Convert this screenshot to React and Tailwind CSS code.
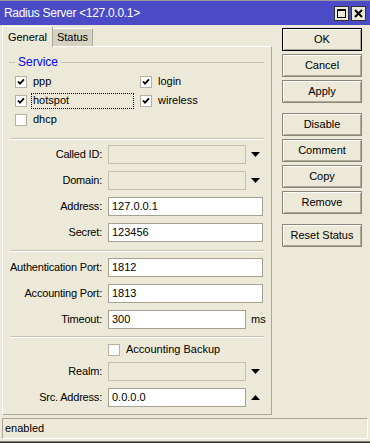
import React from "react";

const Check = () => (
  <svg width="8" height="8" viewBox="0 0 8 8">
    <polyline points="1,3.5 3,5.6 7,1.4" fill="none" stroke="#000" strokeWidth="1.8" />
  </svg>
);

const CheckBox = ({ checked }) => (
  <span className="w-[12px] h-[12px] shrink-0 bg-white border border-[#b4b1a2] flex items-center justify-center">
    {checked && <Check />}
  </span>
);

const ArrowDown = () => (
  <svg width="9" height="5" viewBox="0 0 9 5" className="ml-[5px]">
    <polygon points="0,0 9,0 4.5,5" fill="#000" />
  </svg>
);

const ArrowUp = () => (
  <svg width="9" height="5" viewBox="0 0 9 5" className="ml-[5px]">
    <polygon points="0,5 9,5 4.5,0" fill="#000" />
  </svg>
);

const Separator = ({ className }) => (
  <div className={`mx-[7px] h-[2px] border-t border-[#c6c3b3] border-b border-b-white ${className}`} />
);

const Field = ({ label, value, disabled, wide, after, className }) => (
  <div className={`flex items-center h-[19px] ${className}`}>
    <span className="w-[99px] text-right tracking-[-0.2px]">{label}</span>
    <div
      className={`ml-[6px] h-[19px] flex items-center px-[3px] border ${wide ? "w-[155px]" : "w-[138px]"} ${
        disabled ? "bg-[#ece9d8] border-[#c2bfae]" : "bg-white border-[#a5a291]"
      }`}
    >
      {value}
    </div>
    {after}
  </div>
);

const Button = ({ children, primary, className }) => (
  <div
    className={`h-[23px] w-[80px] flex items-center justify-center border bg-[#ece9d8] shadow-[inset_1px_1px_0_#fff,inset_-1px_-1px_0_#aca899] ${
      primary ? "border-black" : "border-[#8a8778]"
    } ${className}`}
  >
    {children}
  </div>
);

export default function App() {
  return (
    <div className="w-[370px] h-[443px] bg-[#ece9d8] flex flex-col text-[11px] text-black font-['Liberation_Sans',Arial,sans-serif] overflow-hidden">
      {/* Title bar */}
      <div className="h-[25px] shrink-0 border-t border-[#9a9a9a] bg-[#4b4bc6] flex items-center pl-[4px] pr-[4px]">
        <span className="text-white text-[12px] tracking-[-0.3px] flex-1">Radius Server &lt;127.0.0.1&gt;</span>
        <div className="flex gap-[2px]">
          <div className="w-[15px] h-[15px] bg-[#ece9d8] border border-[#333] flex items-center justify-center">
            <svg width="9" height="9" viewBox="0 0 9 9">
              <rect x="0.5" y="0.5" width="8" height="8" fill="none" stroke="#000" />
              <rect x="0" y="0" width="9" height="2" fill="#000" />
            </svg>
          </div>
          <div className="w-[15px] h-[15px] bg-[#ece9d8] border border-[#333] flex items-center justify-center">
            <svg width="9" height="9" viewBox="0 0 9 9">
              <path d="M1 1 L8 8 M8 1 L1 8" stroke="#000" strokeWidth="2" />
            </svg>
          </div>
        </div>
      </div>

      <div className="flex flex-1">
        {/* Left: tabs + panel */}
        <div className="ml-[2px] w-[270px] flex flex-col">
          <div className="h-[21px] flex items-end">
            <div className="w-[51px] h-[21px] bg-[#ece9d8] border-t border-l border-white border-r border-r-[#aca899] flex items-center justify-center relative top-[1px] z-10">
              General
            </div>
            <div className="w-[40px] h-[18px] bg-[#d6d2c2] border-t border-r border-white border-r-[#aca899] flex items-center justify-center">
              Status
            </div>
          </div>
          <div className="h-[369px] border-t border-l border-white border-r border-b border-r-[#aca899] border-b-[#aca899] flex flex-col">
            {/* Service group */}
            <div className="mt-[8px] h-[14px] flex items-center">
              <div className="ml-[6px] w-[6px] h-[1px] bg-[#c6c3b3]" />
              <span className="px-[3px] text-[#0000ff] text-[12px]">Service</span>
              <div className="flex-1 mr-[7px] h-[1px] bg-[#c6c3b3]" />
            </div>
            <div className="mt-[3px] pl-[12px] grid grid-cols-[125px_1fr] auto-rows-[19px]">
              <div className="flex items-center gap-[6px]">
                <CheckBox checked />
                <span>ppp</span>
              </div>
              <div className="flex items-center gap-[6px]">
                <CheckBox checked />
                <span>login</span>
              </div>
              <div className="flex items-center gap-[4px]">
                <CheckBox checked />
                <span className="w-[103px] h-[16px] flex items-center pl-[1px] border border-dotted border-black">hotspot</span>
              </div>
              <div className="flex items-center gap-[6px]">
                <CheckBox checked />
                <span>wireless</span>
              </div>
              <div className="flex items-center gap-[6px]">
                <CheckBox />
                <span>dhcp</span>
              </div>
            </div>

            <Separator className="mt-[9px]" />
            <Field label="Called ID:" disabled after={<ArrowDown />} className="mt-[5px]" />
            <Field label="Domain:" disabled after={<ArrowDown />} className="mt-[7px]" />
            <Field label="Address:" value="127.0.0.1" wide className="mt-[7px]" />
            <Field label="Secret:" value="123456" wide className="mt-[7px]" />

            <Separator className="mt-[8px]" />
            <Field label="Authentication Port:" value="1812" wide className="mt-[6px]" />
            <Field label="Accounting Port:" value="1813" wide className="mt-[7px]" />
            <Field
              label="Timeout:"
              value="300"
              after={<span className="ml-[5px]">ms</span>}
              className="mt-[7px]"
            />

            <Separator className="mt-[7px]" />
            <div className="mt-[2px] h-[19px] flex items-center pl-[105px] gap-[6px]">
              <CheckBox />
              <span>Accounting Backup</span>
            </div>
            <Field label="Realm:" disabled after={<ArrowDown />} className="mt-[3px]" />
            <Field label="Src. Address:" value="0.0.0.0" after={<ArrowUp />} className="mt-[7px]" />
          </div>
        </div>

        {/* Right: buttons */}
        <div className="ml-[10px] pt-[3px] flex flex-col gap-[3px]">
          <Button primary>OK</Button>
          <Button>Cancel</Button>
          <Button>Apply</Button>
          <Button className="mt-[7px]">Disable</Button>
          <Button>Comment</Button>
          <Button>Copy</Button>
          <Button>Remove</Button>
          <Button className="mt-[7px]">Reset Status</Button>
        </div>
      </div>

      {/* Status bar */}
      <div className="mx-[2px] mt-[3px] h-[21px] shrink-0 border-t border-l border-[#aca899] border-b border-r border-b-white border-r-white flex items-center pl-[2px]">
        enabled
      </div>
      <div className="h-[2px] shrink-0" />
      <div className="h-[3px] shrink-0 border-t border-[#808080] bg-[#2d2d2d]" />
    </div>
  );
}
